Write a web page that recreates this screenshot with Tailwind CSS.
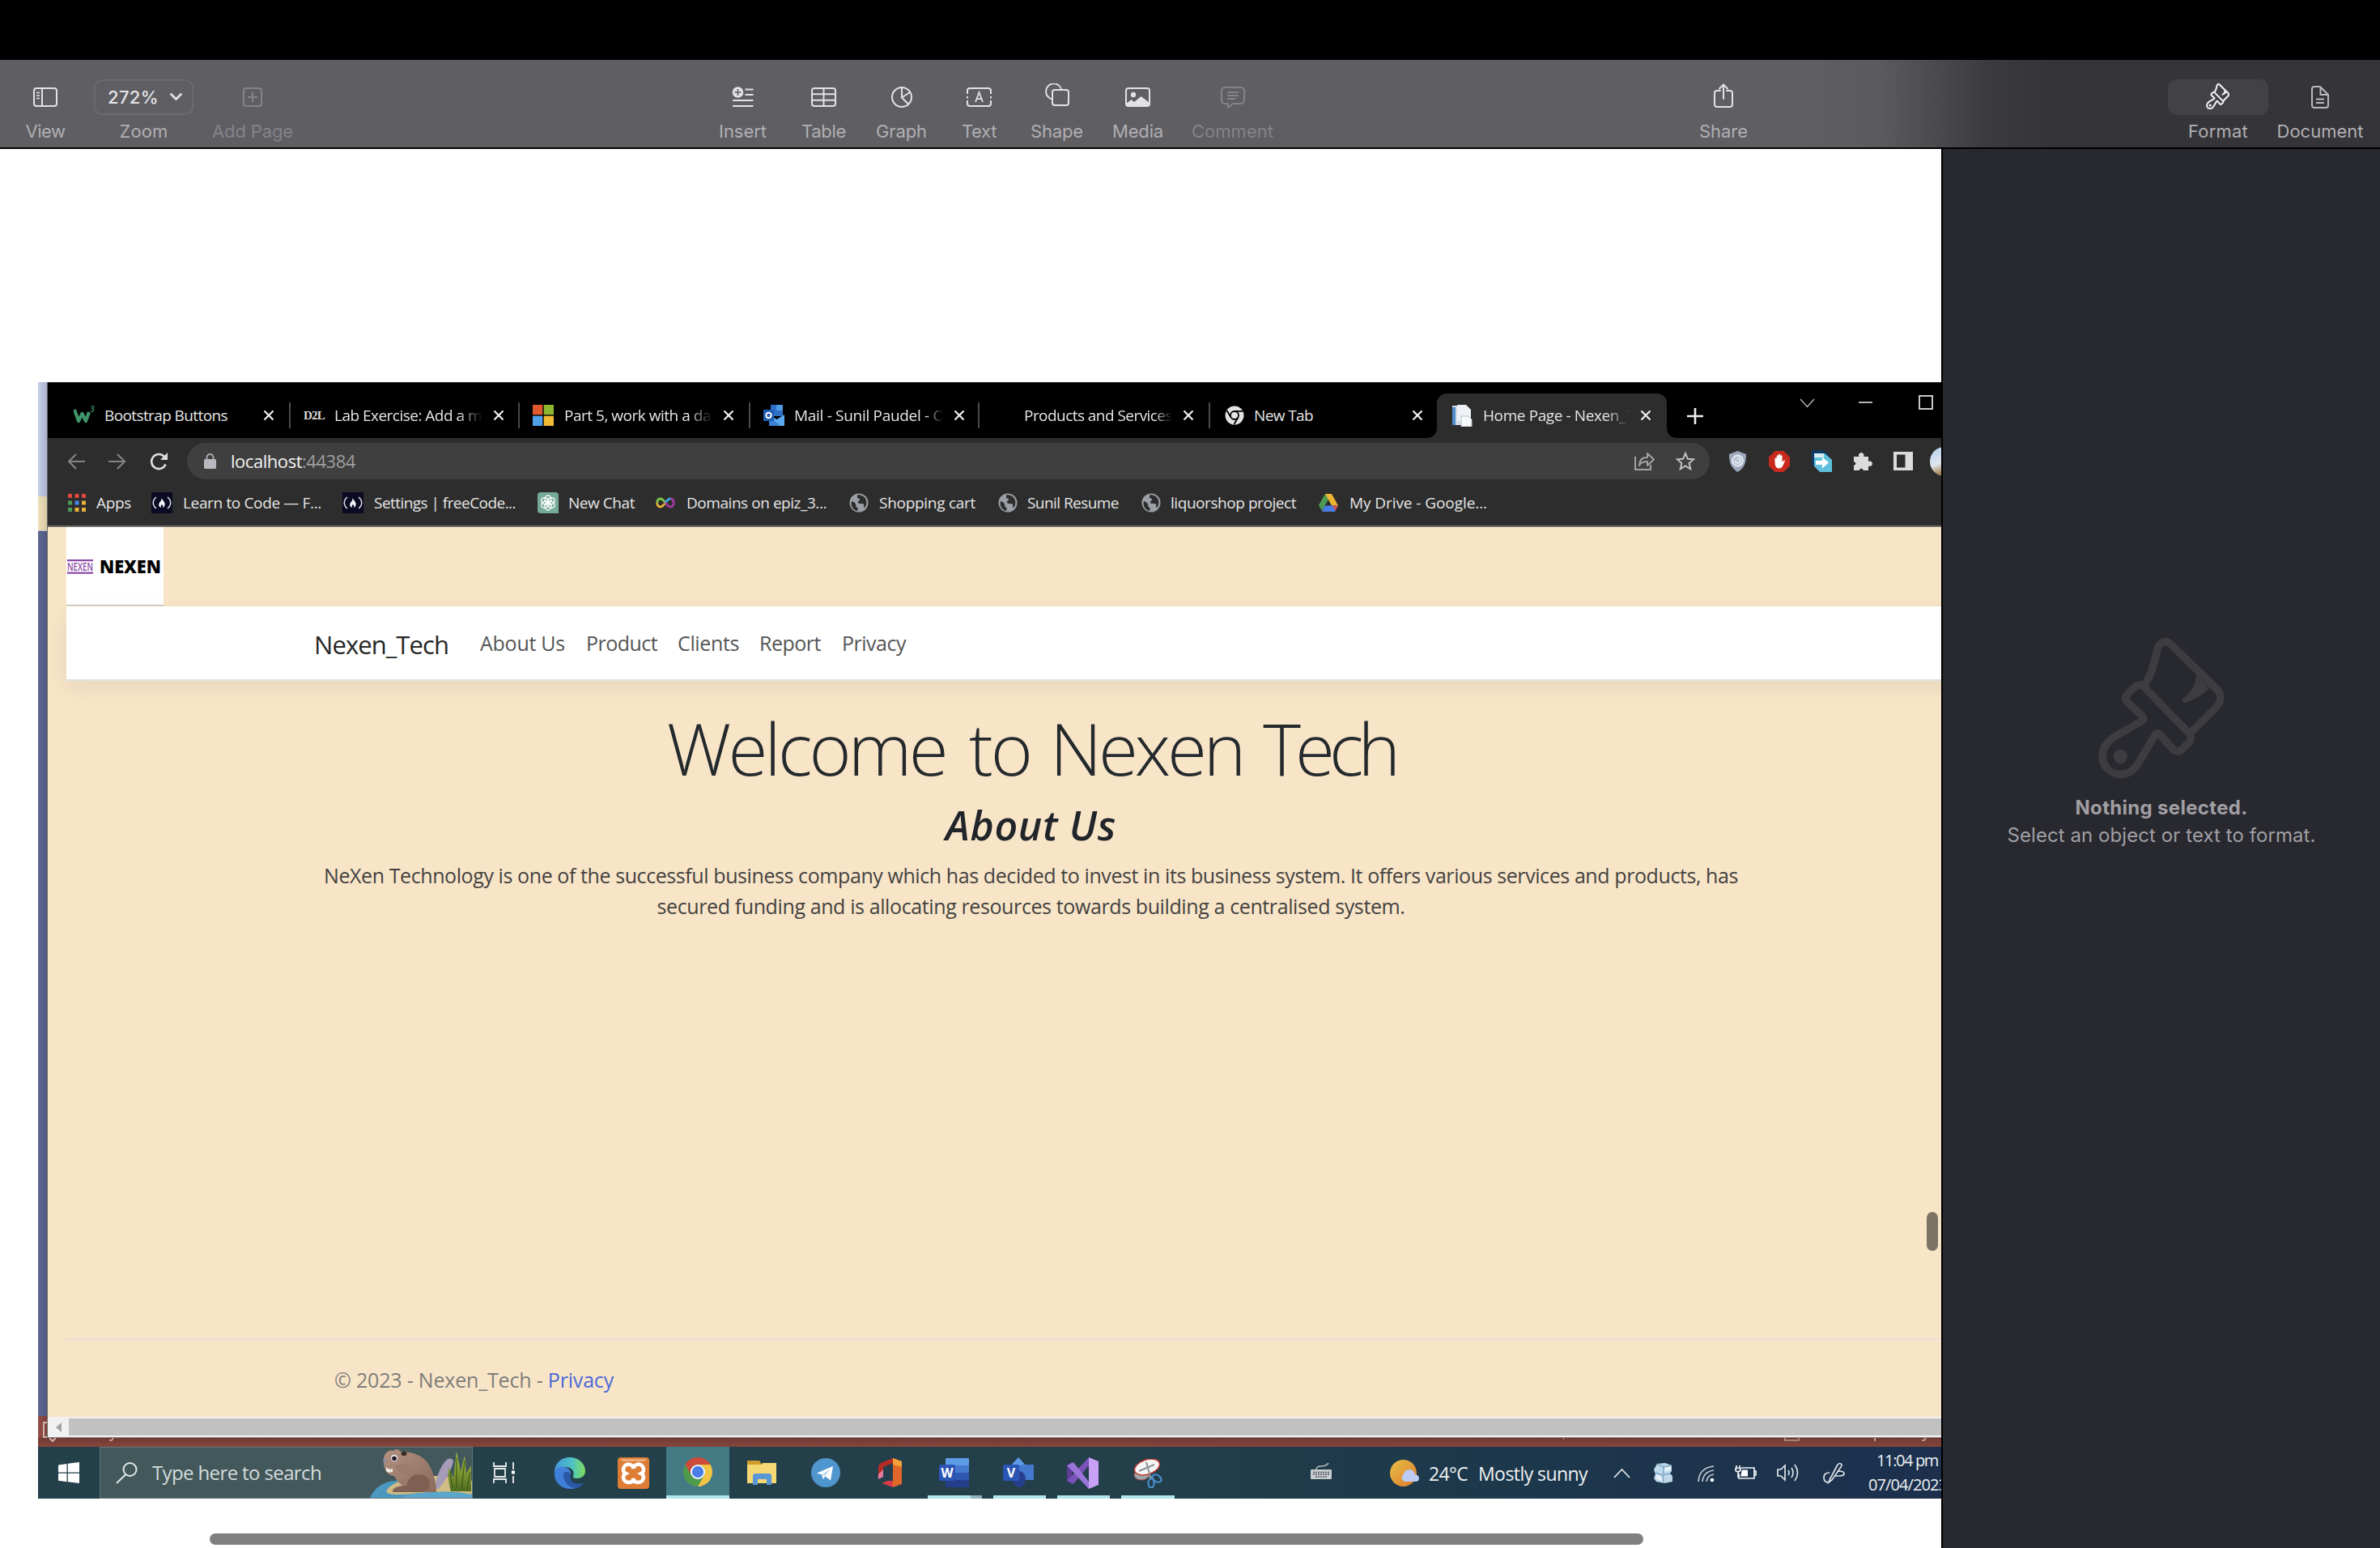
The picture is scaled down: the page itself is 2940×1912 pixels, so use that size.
<!DOCTYPE html>
<html lang="en">
<head>
<meta charset="utf-8">
<title>Pages</title>
<script src="https://cdn.jsdelivr.net/npm/@tailwindcss/browser@4"></script>
</head>
<body class="w-[2940px] h-[1912px] overflow-hidden bg-white flex flex-col font-['Inter',sans-serif]">
<svg width="0" height="0" class="absolute">
  <defs>
    <symbol id="close" viewBox="0 0 14 14"><path d="M1.5 1.5l11 11M12.5 1.5l-11 11" stroke="#f1f1f1" stroke-width="2.200" fill="none"/></symbol>
    <symbol id="globe" viewBox="0 0 24 24"><circle cx="12" cy="12" r="11.500" fill="#9aa0a6"/><path d="M3 10c3 1 4 2 5 3.500s-1 2 1 3.500 2 3 1 5C5 21 1.500 16 3 10zM10 2c1 2-1 3 0 4s3 0 3 2-3 2-2 4 6 0 7 2-1 4 1 4c2-2 3-5 2-9-1-4-5-7-11-7z" fill="#2d2d2d"/></symbol>
    <symbol id="fcc" viewBox="0 0 26 26"><rect width="26" height="26" fill="#0a0a23"/><path d="M6 6c-5 4-5 10 0 14M20 6c5 4 5 10 0 14" stroke="#e8e8ee" stroke-width="1.500" fill="none"/><path d="M12.500 7c1 3 5 5 4 9-.4 1.500-1 2.500-2.500 3 1-2 0-3-1-4-1 1-2 2-1 4-2-.5-3-2-2.800-4 .3-3 3.800-4 3.300-8z" fill="#f3f3f7"/></symbol>
    <symbol id="chrome" viewBox="0 0 24 24"><path d="M22.390 6H12A6 6 0 0 0 6.800 15L1.610 6A12 12 0 0 1 22.390 6Z" fill="#d04a3a"/><path d="M1.610 6L6.800 15A6 6 0 0 0 17.200 15L12 24A12 12 0 0 1 1.610 6Z" fill="#4f9a4b"/><path d="M12 24L17.200 15A6 6 0 0 0 12 6H22.390A12 12 0 0 1 12 24Z" fill="#f0c544"/><circle cx="12" cy="12" r="6" fill="#fff"/><circle cx="12" cy="12" r="4.800" fill="#4a7de8"/></symbol>
    <symbol id="brush" viewBox="0 0 155 173"><g fill="none" stroke="currentColor" stroke-linejoin="round" stroke-linecap="round"><path d="M57 58C66 46 70 28 73 14C74.500 5 84 1.500 90 8L146 63C152.500 69 152.500 78 146 85L115 116"/><path d="M56 60L110 115.500C115 120 116 124 112 129L104 137C100 141 96 141 92 137L76 119C74 117 71.500 117 70 120L51 152C46 161 38 168.500 28 168.500C15 168.500 5 158 5 146C5 136 11 128 20 122L53 103C56 101 56.500 99 54 96L36.500 80C33 76.500 33 73 36.500 69L44 61.500C48 58 52 57 56 60Z"/></g><circle cx="27.300" cy="146.300" r="8.600" fill="currentColor"/><path d="M121 45C121 58 113 69 104.500 75C102 77 104 80.500 107 80C118 77 128 71 137 62Z" fill="currentColor"/></symbol>
  </defs>
</svg>

<!-- menu bar strip -->
<div class="h-[74px] shrink-0 bg-black"></div>

<!-- toolbar -->
<header class="h-[110px] shrink-0 flex pt-6 border-b-2 border-b-black bg-[linear-gradient(to_right,#5f5e63_2230px,#5b5a5f_2320px,#4b4a4f_2390px,#3b3a3f_2455px,#353439_2530px)] text-[22px] text-[#b0afb2] leading-10 whitespace-nowrap">
  <div class="ml-[31px] w-[50px] flex flex-col items-center">
    <div class="h-11 flex items-center"><svg width="30" height="24" viewBox="0 0 30 24" fill="none" stroke="#e2e1e6" stroke-width="2"><rect x="1" y="1" width="28" height="22" rx="3"/><path d="M11 1v22"/><path d="M4 6.500h4M4 10h4M4 13.500h4" stroke-width="1.500"/></svg></div>
    <span data-fit class="w-[49px]">View</span>
  </div>
  <div class="ml-[35px] w-[123px] flex flex-col items-center">
    <div class="h-11 w-full rounded-[10px] border-2 border-[#6b6a6f] flex items-center pl-[15px] text-[#e6e5ea] font-medium"><span data-fit class="w-[63px]">272%</span><svg class="ml-[14px]" width="15" height="10" viewBox="0 0 15 10" fill="none" stroke="#e2e1e6" stroke-width="2.800" stroke-linecap="round" stroke-linejoin="round"><path d="M1.500 1.500l6 6 6-6"/></svg></div>
    <span data-fit class="w-[60px]">Zoom</span>
  </div>
  <div class="ml-[23px] w-[100px] flex flex-col items-center text-[#848388]">
    <div class="h-11 flex items-center"><svg width="24" height="24" viewBox="0 0 24 24" fill="none" stroke="#848388" stroke-width="2"><rect x="1" y="1" width="22" height="22" rx="3"/><path d="M12 6v12M6 12h12"/></svg></div>
    <span data-fit class="w-[100px]">Add Page</span>
  </div>
  <div class="ml-[526px] w-[59px] flex flex-col items-center">
    <div class="h-11 flex items-center"><svg width="28" height="26" viewBox="0 0 28 26" fill="none" stroke="#e2e1e6" stroke-width="2.200"><circle cx="7.500" cy="7" r="6.800" fill="#e2e1e6" stroke="none"/><path d="M7.500 3v8M3.500 7h8" stroke="#5f5e63" stroke-width="1.600"/><path d="M16.500 3.500h10M16.500 10h10M1 17h25.500M1 24h25.500"/></svg></div>
    <span data-fit class="w-[59px]">Insert</span>
  </div>
  <div class="ml-[43px] w-[55px] flex flex-col items-center">
    <div class="h-11 flex items-center"><svg width="31" height="24" viewBox="0 0 31 24" fill="none" stroke="#e2e1e6" stroke-width="2"><rect x="1" y="1" width="29" height="22" rx="3"/><path d="M1 8.300h29M1 15.700h29M15.500 1v22"/></svg></div>
    <span data-fit class="w-[55px]">Table</span>
  </div>
  <div class="ml-[37px] w-[63px] flex flex-col items-center">
    <div class="h-11 flex items-center"><svg width="26" height="26" viewBox="0 0 26 26" fill="none" stroke="#e2e1e6" stroke-width="2"><circle cx="13" cy="13" r="12"/><path d="M13 1v12.500l8 8M13 13.500l10-6.500"/></svg></div>
    <span data-fit class="w-[63px]">Graph</span>
  </div>
  <div class="ml-[43px] w-[43px] flex flex-col items-center">
    <div class="h-11 flex items-center"><svg width="31" height="24" viewBox="0 0 31 24" fill="none" stroke="#e2e1e6" stroke-width="2"><path d="M1 8V4a3 3 0 0 1 3-3h23a3 3 0 0 1 3 3v4M1 16v4a3 3 0 0 0 3 3h23a3 3 0 0 0 3-3v-4M1 11v2.500M30 11v2.500"/><path d="M11 18L15.500 6L20 18M12.500 14.200h6" stroke-width="1.800"/></svg></div>
    <span data-fit class="w-[43px]">Text</span>
  </div>
  <div class="ml-[42px] w-[65px] flex flex-col items-center">
    <div class="h-11 flex items-start"><svg class="mt-[5px]" width="30" height="28" viewBox="0 0 30 28" fill="none" stroke="#e2e1e6" stroke-width="2"><path d="M9 19.500A9.700 9.700 0 1 1 20 7"/><rect x="9" y="8" width="20" height="19" rx="3"/></svg></div>
    <span data-fit class="w-[65px]">Shape</span>
  </div>
  <div class="ml-[36px] w-[63px] flex flex-col items-center">
    <div class="h-11 flex items-center"><svg width="31" height="24" viewBox="0 0 31 24" fill="none" stroke="#e2e1e6" stroke-width="2"><rect x="1" y="1" width="29" height="22" rx="3"/><circle cx="10" cy="9" r="3.200" fill="#e2e1e6" stroke="none"/><path d="M1 20l6.500-5 3.500 3 8.500-7L30 19v2q0 2-3 2H4q-3 0-3-3z" fill="#e2e1e6" stroke="none"/></svg></div>
    <span data-fit class="w-[63px]">Media</span>
  </div>
  <div class="ml-[35px] w-[101px] flex flex-col items-center text-[#848388]">
    <div class="h-11 flex items-center"><svg width="30" height="27" viewBox="0 0 30 27" fill="none" stroke="#848388" stroke-width="2" stroke-linejoin="round"><path d="M5 1h20a4 4 0 0 1 4 4v12a4 4 0 0 1-4 4H15l-6 5v-5H5a4 4 0 0 1-4-4V5a4 4 0 0 1 4-4z"/><path d="M8 7h14M8 11h14M8 15h10" stroke-width="1.800"/></svg></div>
    <span data-fit class="w-[101px]">Comment</span>
  </div>
  <div class="ml-[526px] w-[60px] flex flex-col items-center">
    <div class="h-11 flex items-start"><svg class="mt-[5px]" width="24" height="30" viewBox="0 0 24 30" fill="none" stroke="#e2e1e6" stroke-width="2" stroke-linecap="round" stroke-linejoin="round"><path d="M8 9H4a3 3 0 0 0-3 3v14a3 3 0 0 0 3 3h16a3 3 0 0 0 3-3V12a3 3 0 0 0-3-3h-4M12 19V2M7 6.500L12 1.500l5 5"/></svg></div>
    <span data-fit class="w-[60px]">Share</span>
  </div>
  <div class="ml-[519px] w-[124px] flex flex-col items-center">
    <div class="h-11 w-full rounded-[10px] bg-[#424146] flex items-center justify-center text-[#f2f1f5]"><svg class="mb-[3px] mr-0.5 stroke-[11]" width="29" height="32"><use href="#brush"/></svg></div>
    <span data-fit class="w-[74px]">Format</span>
  </div>
  <div class="ml-[10px] w-[108px] flex flex-col items-center">
    <div class="h-11 flex items-center"><svg width="22" height="28" viewBox="0 0 22 28" fill="none" stroke="#b9b8bd" stroke-width="2" stroke-linejoin="round"><path d="M4 1h7l10 10v13a3 3 0 0 1-3 3H4a3 3 0 0 1-3-3V4a3 3 0 0 1 3-3zM11.500 1v10H21M6 16.500h10M6 21h10"/></svg></div>
    <span data-fit class="w-[107px]">Document</span>
  </div>
</header>

<div class="flex h-[1728px]">
  <!-- document canvas -->
  <main class="relative w-[2398px] h-[1728px] shrink-0 overflow-hidden bg-white pt-[288px] pl-[47px] font-['Open_Sans',sans-serif]">
    <div class="w-[2351px] h-[1379px] overflow-hidden flex flex-col">
      <div class="flex h-[1304px] shrink-0 bg-[#8a463d]">
        <!-- sliver of the window behind -->
        <div class="w-[11px] shrink-0 flex flex-col">
          <div class="h-[141px] bg-linear-to-r from-[#c6cfe9] to-[#aab3cf]"></div>
          <div class="h-[42px] bg-linear-to-r from-[#eee0b8] to-[#d6c9a3]"></div>
          <div class="h-[1094px] border-t border-[#b9bfd6] bg-linear-to-r from-[#5f6892] to-[#505880]"></div>
          <div class="h-[27px] pt-[7px] pl-[6px] bg-linear-to-r from-[#94504a] to-[#7d3f38]"><div class="h-5 w-[5px] border-2 border-r-0 border-[#cfb5b1]"></div></div>
        </div>

        <!-- browser window -->
        <div class="w-[2340px] h-[1304px] flex flex-col bg-[#f8e5c8] border-l border-[#6b6a68]">
          <!-- tab strip -->
          <div class="h-[69px] shrink-0 bg-black border-t border-[#222] flex text-[19px] leading-7 text-[#e6e6e6] whitespace-nowrap [&>*]:shrink-0">
            <div class="mt-[12px] h-14 flex w-[1702px]">
              <div class="w-[298px] flex items-center pl-[32px]">
                <svg width="26" height="26" viewBox="0 0 26 26"><path d="M1 6l5 14 4.500-9 4.500 9L19 9" fill="none" stroke="#3f9468" stroke-width="4.200" stroke-linejoin="round"/><path d="M21 2h4l-2 3c3 0 2 4-2 3" fill="none" stroke="#3f9468" stroke-width="1.200"/></svg>
                <span data-fit class="ml-[12px] w-[152px]">Bootstrap Buttons</span>
                <svg class="ml-[44px]" width="14" height="14"><use href="#close"/></svg>
              </div>
              <div class="w-[283px] flex items-center"><i class="w-0.5 h-8 bg-[#4a4a4a]"></i>
                <span data-fit class="ml-[16px] w-[26px] text-[15px] font-['Liberation_Serif',serif] font-bold text-[#dcdcdc]">D2L</span>
                <div class="ml-[12px] w-[183px] overflow-hidden [mask-image:linear-gradient(to_right,black_84%,transparent)]"><span data-fit class="block w-[182px]">Lab Exercise: Add a m</span></div>
                <svg class="ml-[13px]" width="14" height="14"><use href="#close"/></svg>
              </div>
              <div class="w-[285px] flex items-center"><i class="w-0.5 h-8 bg-[#4a4a4a]"></i>
                <svg class="ml-[16px]" width="26" height="26" viewBox="0 0 26 26"><path d="M0 0h12.300v12.300H0z" fill="#e2582e"/><path d="M13.700 0H26v12.300H13.700z" fill="#8db82f"/><path d="M0 13.700h12.300V26H0z" fill="#4fa0e8"/><path d="M13.700 13.700H26V26H13.700z" fill="#f2bb35"/></svg>
                <div class="ml-[13px] w-[183px] overflow-hidden [mask-image:linear-gradient(to_right,black_84%,transparent)]"><span data-fit class="block w-[181px]">Part 5, work with a da</span></div>
                <svg class="ml-[13px]" width="14" height="14"><use href="#close"/></svg>
              </div>
              <div class="w-[283px] flex items-center"><i class="w-0.5 h-8 bg-[#4a4a4a]"></i>
                <svg class="ml-[16px]" width="26" height="26" viewBox="0 0 26 26"><path d="M9 0h15v14H9z" fill="#2f6fc4"/><path d="M16 0h8v7h-8z" fill="#4d9be8"/><path d="M7 12l9.500 6L26 12v14H7z" fill="#5aaaf0"/><path d="M7 14l14 12H7z" fill="#3b82d4"/><rect y="6" width="13" height="14" fill="#1f5cb4"/><circle cx="6.500" cy="13" r="3.200" fill="none" stroke="#fff" stroke-width="2"/></svg>
                <div class="ml-[12px] w-[184px] overflow-hidden [mask-image:linear-gradient(to_right,black_88%,transparent)]"><span data-fit class="block w-[186px]">Mail - Sunil Paudel - O</span></div>
                <svg class="ml-[13px]" width="14" height="14"><use href="#close"/></svg>
              </div>
              <div class="w-[285px] flex items-center"><i class="w-0.5 h-8 bg-[#4a4a4a]"></i>
                <div class="ml-[55px] w-[183px] overflow-hidden [mask-image:linear-gradient(to_right,black_88%,transparent)]"><span data-fit class="block w-[183px]">Products and Services</span></div>
                <svg class="ml-[13px]" width="14" height="14"><use href="#close"/></svg>
              </div>
              <div class="w-[268px] flex items-center"><i class="w-0.5 h-8 bg-[#4a4a4a]"></i>
                <svg class="ml-[18px]" width="24" height="24" viewBox="0 0 24 24"><circle cx="12" cy="12" r="11.500" fill="#e4e4e4"/><circle cx="12" cy="12" r="5" fill="#e4e4e4" stroke="#000" stroke-width="1.800"/><path d="M12 6.800h10M7.500 14.500L2.500 6M16.500 14.500L11.500 23" stroke="#000" stroke-width="1.800"/></svg>
                <span data-fit class="ml-[12px] w-[73px]">New Tab</span>
                <svg class="ml-[122px]" width="14" height="14"><use href="#close"/></svg>
              </div>
            </div>
            <!-- active tab -->
            <svg class="mt-[44px] ml-[2px]" width="12" height="24" viewBox="0 0 12 24"><path d="M12 10v14H0q12-1 12-14z" fill="#2d2d2d"/></svg>
            <div class="mt-[13px] w-[284px] h-[56px] rounded-t-xl bg-[#2d2d2d] flex items-center pl-[18px] pb-[2px]">
              <svg width="26" height="27" viewBox="0 0 26 27"><path d="M1 1h13l8 6v18H1z" fill="#d5dde8"/><path d="M1 3h4v22H1z" fill="#4f8fd0"/><path d="M7 0h11l6 6v14H7z" fill="#eef1f6"/><path d="M12 14h9l4 4v9H12z" fill="#f8fafc" stroke="#b8c0cc"/></svg>
              <div class="ml-[13px] w-[181px] overflow-hidden [mask-image:linear-gradient(to_right,black_84%,transparent)]"><span data-fit class="block w-[186px]">Home Page - Nexen_T</span></div>
              <svg class="ml-[13px]" width="14" height="14"><use href="#close"/></svg>
            </div>
            <svg class="mt-[44px]" width="12" height="24" viewBox="0 0 12 24"><path d="M0 10v14h12Q0 23 0 10z" fill="#2d2d2d"/></svg>
            <svg class="ml-[13px] mt-[31px]" width="20" height="20" viewBox="0 0 20 20"><path d="M10 0v20M0 10h20" stroke="#f1f1f1" stroke-width="2.600"/></svg>
            <svg class="ml-[119px] mt-[19px]" width="19" height="12" viewBox="0 0 19 12"><path d="M1 1l8.500 9.500L18 1" stroke="#b0b0b0" stroke-width="1.500" fill="none"/></svg>
            <i class="ml-[54px] mt-[23px] w-[17px] h-0.5 bg-[#b5b5b5]"></i>
            <i class="ml-[57px] mt-[15px] w-[18px] h-[18px] border-2 border-[#c9c9c9]"></i>
          </div>

          <!-- address row -->
          <div class="h-[57px] shrink-0 bg-[#2d2d2d] flex items-center overflow-hidden [&>*]:shrink-0">
            <svg class="ml-[24px]" width="22" height="20" viewBox="0 0 22 20" fill="none" stroke="#858585" stroke-width="2"><path d="M22 10H2M11 1l-9 9 9 9"/></svg>
            <svg class="ml-[29px]" width="22" height="20" viewBox="0 0 22 20" fill="none" stroke="#858585" stroke-width="2"><path d="M0 10h20M11 1l9 9-9 9"/></svg>
            <svg class="ml-[29px]" width="23" height="22" viewBox="0 0 23 22" fill="none" stroke="#dedede" stroke-width="2.600"><path d="M19.500 14.500A9 9 0 1 1 18 5.200"/><path d="M22 0v9h-9z" fill="#dedede" stroke="none"/></svg>
            <div class="ml-[23px] w-[1881px] h-[45px] rounded-full bg-[#3f3f3f] flex items-center">
              <svg class="ml-[21px]" width="15" height="19" viewBox="0 0 15 19"><rect y="7" width="15" height="12" rx="1.500" fill="#b8b9bf"/><path d="M3.500 8V5a4 4 0 0 1 8 0v3" fill="none" stroke="#a9aaaf" stroke-width="2"/></svg>
              <div data-fit class="ml-[18px] mb-[2px] w-[154px] text-[22px] leading-8 text-[#f2f2f2] whitespace-nowrap">localhost<span class="text-[#9d9d9d]">:44384</span></div>
              <svg class="ml-[1580px]" width="25" height="23" viewBox="0 0 25 23" fill="none" stroke="#a2a2a2" stroke-width="2"><path d="M1 6v16h19v-6"/><path d="M6 17c0-7 4-10 10-10V2l8 7.500-8 7.500v-5c-5 0-8 1-10 5z" stroke-linejoin="round"/></svg>
              <svg class="ml-[26px]" width="24" height="23" viewBox="0 0 24 23" fill="none" stroke="#c2c2c2" stroke-width="2"><path d="M12 2l2.900 6.800 7.100.6-5.400 4.700 1.700 7.200L12 17.400l-6.300 3.900 1.700-7.200L2 9.400l7.100-.6z"/></svg>
            </div>
            <svg class="ml-[24px]" width="21" height="26" viewBox="0 0 21 26"><path d="M10.500 0L21 4c0 10-2 17-10.500 22C2 21 0 14 0 4z" fill="#9ea8bd"/><circle cx="10.500" cy="12" r="6.500" fill="#b9c2d3" stroke="#e9edf4" stroke-width="1.800"/><path d="M7.500 12a3 3 0 1 0 3-3" fill="none" stroke="#e9edf4" stroke-width="1.500"/></svg>
            <svg class="ml-[28px]" width="26" height="26" viewBox="0 0 26 26"><path d="M7.600 0h10.800L26 7.600v10.800L18.400 26H7.600L0 18.400V7.600z" fill="#c92a1e"/><path d="M7.500 14V9q1.500-1.200 2.200 0V6q1.200-1.500 2.300 0V4.500q1.200-1.500 2.300 0V6q1.200-1.500 2.300 0v8l2-2.500q2-.5 1 1.500L17 19q-1.500 2.500-4.500 2.500-5 0-5-7.500z" fill="#fff"/></svg>
            <svg class="ml-[27px]" width="25" height="27" viewBox="0 0 25 27"><path d="M0 0h14l7 6v13H0z" fill="#0e3b66"/><path d="M3 4h13l9 8v15H10l-7-7z" fill="#5fc0dc"/><path d="M3 4h12v5H3z" fill="#d9eef5"/><path d="M5 13h8V8.500l8 7-8 7V18H5z" fill="#fff"/></svg>
            <svg class="ml-[26px]" width="24" height="24" viewBox="0 0 24 24" fill="#dcdcdc"><path d="M1 6h6.500a3.200 3.200 0 1 1 5.500 0h6v6a3.200 3.200 0 1 1 0 5.500V23h-6q-2.800-5-5.500 0H1v-6q5-2.500 0-5z"/></svg>
            <svg class="ml-[26px]" width="24" height="23" viewBox="0 0 24 23"><path fill="#dcdcdc" fill-rule="evenodd" d="M0 0h24v23H0zM4 3.500v16h10.500v-16z"/></svg>
            <div class="ml-[21px] w-9 h-9 rounded-full bg-[linear-gradient(160deg,#c4d8f0_20%,#dfe6ee_50%,#a98d5e_75%,#5f4d33)]"></div>
          </div>

          <!-- bookmarks -->
          <div class="h-[53px] shrink-0 bg-[#2d2d2d] border-b-2 border-[#6e6c69] pb-[5px] flex items-center text-[19px] leading-7 text-[#e6e6e6] whitespace-nowrap [&>*]:shrink-0">
            <svg class="ml-[25px]" width="22" height="22" viewBox="0 0 22 22"><path d="M0 0h5v5H0zM8.500 0h5v5h-5zM17 0h5v5h-5z" fill="#e0493c"/><path d="M0 8.500h5v5H0z" fill="#4d9b55"/><path d="M8.500 8.500h5v5h-5z" fill="#4a86e8"/><path d="M17 8.500h5v5h-5zM8.500 17h5v5h-5zM17 17h5v5h-5z" fill="#eab03c"/><path d="M0 17h5v5H0z" fill="#4d9b55"/></svg>
            <span data-fit class="ml-[13px] w-[43px]">Apps</span>
            <svg class="ml-[25px]" width="26" height="26"><use href="#fcc"/></svg>
            <span data-fit class="ml-[13px] w-[171px]">Learn to Code — F...</span>
            <svg class="ml-[26px]" width="26" height="26"><use href="#fcc"/></svg>
            <span data-fit class="ml-[13px] w-[175px]">Settings | freeCode...</span>
            <svg class="ml-[27px]" width="26" height="26" viewBox="0 0 26 26"><path d="M4 0h18q4 0 4 4v22H4q-4 0-4-4V4q0-4 4-4z" fill="#75a99a"/><g fill="none" stroke="#fff" stroke-width="1.400"><ellipse cx="13" cy="9" rx="4" ry="5"/><ellipse cx="13" cy="9" rx="4" ry="5" transform="rotate(60 13 13)"/><ellipse cx="13" cy="9" rx="4" ry="5" transform="rotate(120 13 13)"/><ellipse cx="13" cy="9" rx="4" ry="5" transform="rotate(180 13 13)"/><ellipse cx="13" cy="9" rx="4" ry="5" transform="rotate(240 13 13)"/><ellipse cx="13" cy="9" rx="4" ry="5" transform="rotate(300 13 13)"/></g></svg>
            <span data-fit class="ml-[12px] w-[82px]">New Chat</span>
            <svg class="ml-[26px]" width="24" height="14" viewBox="0 0 24 14" fill="none" stroke-width="2.800"><path d="M12 7C9 2.500 7.500 2 5.500 2a4.500 5 0 0 0-3.800 5" stroke="#7cc04a"/><path d="M1.700 7a4.500 5 0 0 0 3.800 5C8 12 9 11 12 7" stroke="#e8b13a"/><path d="M12 7c3-4.500 4.500-5 6.500-5" stroke="#3fa3e8"/><path d="M18.500 2c5 0 5 10 0 10-2 0-3.500-.5-6.500-5" stroke="#a23aa0"/></svg>
            <span data-fit class="ml-[14px] w-[173px]">Domains on epiz_3...</span>
            <svg class="ml-[28px]" width="24" height="24"><use href="#globe"/></svg>
            <span data-fit class="ml-[13px] w-[119px]">Shopping cart</span>
            <svg class="ml-[28px]" width="24" height="24"><use href="#globe"/></svg>
            <span data-fit class="ml-[12px] w-[113px]">Sunil Resume</span>
            <svg class="ml-[28px]" width="24" height="24"><use href="#globe"/></svg>
            <span data-fit class="ml-[12px] w-[155px]">liquorshop project</span>
            <svg class="ml-[28px]" width="24" height="22" viewBox="0 0 24 22"><path d="M8 0h8l-8.500 14.500L4 21 0 14z" fill="#4e9a53"/><path d="M8 0h8l8 14.500h-8z" fill="#edb532"/><path d="M7.500 14.500H24L20 22H4z" fill="#4a7ee6"/><path d="M17 14.500h7l-3.500 6z" fill="#d9493c"/></svg>
            <span data-fit class="ml-[14px] w-[170px]">My Drive - Google...</span>
          </div>

          <!-- web page -->
          <div class="h-[1099px] shrink-0 pl-[23px] overflow-hidden text-[#212529] whitespace-nowrap">
            <div class="h-[97px] w-[120px] bg-white border-b border-[#b5b5b5] flex items-center">
              <svg width="120" height="18" viewBox="0 0 120 18" class="mt-[2px]"><g fill="#8a4aa8"><path d="M1 0h32v2.200H1zM1 15.500h32v2.200H1z"/><text x="1" y="13.800" font-size="13.500" textLength="32" lengthAdjust="spacingAndGlyphs" font-family="Open Sans" font-weight="600">NEXEN</text></g><text x="41" y="16.500" font-size="22" textLength="76" lengthAdjust="spacingAndGlyphs" font-family="Open Sans" font-weight="800" fill="#000">NEXEN</text></svg>
            </div>
            <div class="mt-px h-[92px] w-[2380px] bg-white border-b-2 border-[#dee2e6] shadow-[0_8px_24px_rgba(0,0,0,0.07)] flex items-center text-[25px] leading-[38px] text-[#555]">
              <span data-fit class="ml-[306px] w-[166px] text-[31px] leading-[46px] mt-[3px] text-[#262626]">Nexen_Tech</span>
              <span data-fit class="ml-[39px] w-[105px]">About Us</span>
              <span data-fit class="ml-[26px] w-[88px]">Product</span>
              <span data-fit class="ml-[25px] w-[76px]">Clients</span>
              <span data-fit class="ml-[25px] w-[76px]">Report</span>
              <span data-fit class="ml-[26px] w-[79px]">Privacy</span>
            </div>
            <div class="w-[2383px] flex flex-col items-center">
              <h1 class="mt-[29px] flex text-[89px] leading-[107px] font-light text-[#24292c]"><span data-fit class="w-[344px]">Welcome</span>&nbsp;<span data-fit class="ml-[6px] w-[76px]">to</span>&nbsp;<span data-fit class="ml-[1px] w-[238px]">Nexen</span>&nbsp;<span data-fit class="ml-[2px] w-[163px]">Tech</span></h1>
              <h2 data-fit class="mt-[13px] w-[211px] text-[50px] leading-[59px] font-semibold italic">About Us</h2>
              <p data-fit class="mt-[13px] w-[1747px] text-[25px] leading-[38px] text-[#444240]">NeXen Technology is one of the successful business company which has decided to invest in its business system. It offers various services and products, has</p>
              <p data-fit class="w-[924px] text-[25px] leading-[39px] text-[#444240]">secured funding and is allocating resources towards building a centralised system.</p>
            </div>
            <div class="mt-[514px] w-[2380px] border-t-2 border-[#e9dfd6] pt-[30px] pl-[331px] text-[25px] leading-[38px] text-[#7d7d7a]">
              <div data-fit class="w-[345px]">© 2023 - Nexen_Tech - <span class="text-[#4a69d6]">Privacy</span></div>
            </div>
          </div>

          <!-- page scrollbar -->
          <div class="h-[26px] shrink-0 flex bg-[#f1f1f1] border-b border-[#8c8a88]">
            <div class="w-[26px] flex items-center justify-center"><svg width="7" height="12" viewBox="0 0 7 12"><path d="M7 0v12L0 6z" fill="#a3a3a3"/></svg></div>
            <div class="grow mt-[2px] mb-[2px] bg-[#c1c1c1]"></div>
          </div>
        </div>
      </div>

      <div class="h-[11px] shrink-0 bg-linear-to-b from-[#703a33] to-[#85463d] flex items-start">
        <svg class="ml-[14px]" width="8" height="5" viewBox="0 0 8 5"><path d="M0 0l4 4 4-4" fill="none" stroke="#cfb5b1" stroke-width="2"/></svg>
        <svg class="ml-[66px]" width="6" height="4" viewBox="0 0 6 4"><path d="M5 0L3 3H0" fill="none" stroke="#cfb5b1" stroke-width="1.500"/></svg>
        <i class="ml-[1790px] w-px h-[2px] bg-[#b89a95]"></i>
        <i class="ml-[272px] w-[19px] h-[4px] border-2 border-t-0 border-[#a9827c]"></i>
        <i class="ml-[92px] w-[2px] h-[4px] bg-[#c0a39e]"></i>
        <svg class="ml-[57px]" width="6" height="4" viewBox="0 0 6 4"><path d="M5 0L3 3H0" fill="none" stroke="#cfb5b1" stroke-width="1.500"/></svg>
      </div>

      <!-- taskbar -->
      <div class="h-16 shrink-0 flex items-center bg-[linear-gradient(to_right,#24404b,#23404a_55%,#1d384b_75%,#1c304e)] text-[#eef2f3] whitespace-nowrap overflow-hidden">
        <svg class="ml-[25px] shrink-0" width="26" height="26" viewBox="0 0 26 26" fill="#fff"><path d="M0 3.500L10.500 2v10.500H0zM11.800 1.800L26 0v12.500H11.800zM0 13.800h10.500v10.500L0 22.800zM11.800 13.800H26V26l-14.200-1.700z"/></svg>
        <div class="ml-[25px] w-[461px] h-16 shrink-0 border border-[#62767a] bg-[#42585b] flex items-center">
          <svg class="ml-[19px]" width="27" height="27" viewBox="0 0 27 27" fill="none" stroke="#e3e8e8" stroke-width="2"><circle cx="17.500" cy="9" r="8"/><path d="M12 15.500L1 26"/></svg>
          <span data-fit class="ml-[18px] w-[209px] text-[24px] leading-9 text-[#d5dcdc]">Type here to search</span>
          <svg class="ml-[60px]" width="126" height="62" viewBox="0 0 126 62">
            <defs><linearGradient id="fur" x1="0" y1="0" x2="1" y2="1"><stop offset="0" stop-color="#b2917f"/><stop offset="1" stop-color="#8a6b5c"/></linearGradient><linearGradient id="grass" x1="0" y1="0" x2="0" y2="1"><stop offset="0" stop-color="#b4c94a"/><stop offset="1" stop-color="#4d6b1e"/></linearGradient></defs>
            <path d="M0 62c6-14 18-20 30-21 30-3 60 2 96 14v7z" fill="#4a97bf"/>
            <path d="M20 54C26 42 50 36 80 35c20 0 34 2 46 6v17C90 50 60 58 32 58q-10 0-12-4z" fill="#d0bd85"/>
            <path d="M38 61c26-8 60-7 88-3v4H38z" fill="#5aa7cc"/>
            <path d="M80 50c2-14 8-30 16-36q6-2 7 3c-2 10-10 24-18 34z" fill="#a69cb8"/>
            <path d="M17 18C16 8 22 2 29 4c3-4 8-1 9 1 14 0 28 4 36 18 6 12 8 22 8 32H28c-2-5 6-8 12-8-4-3-8-8-10-12-6 0-13-5-13-17z" fill="url(#fur)"/>
            <path d="M28 55c2-6 10-7 18-8 0-8 6-14 14-14 10 0 15 6 14 14-1 6-6 8-14 8z" fill="#7d6052"/>
            <ellipse cx="43" cy="27" rx="11" ry="6" fill="#9b7b6b" transform="rotate(18 43 27)"/>
            <circle cx="30" cy="13" r="4.200" fill="#e8e4ee"/><circle cx="30" cy="13.500" r="2.800" fill="#1f1a26"/><ellipse cx="42" cy="7.500" rx="3.500" ry="2.800" fill="#3d2c25"/>
            <circle cx="18" cy="16" r="2" fill="#8a8fb5"/><path d="M20 24q3 4 8 2v4q-5 2-8-1z" fill="#f0ebe6"/>
            <path d="M100 54c-3-12-4-20-3-30l6 14 4-33 5 25 5-20 2 22 6-10v32z" fill="url(#grass)"/>
            <path d="M107 50V12M113 52l4-36M102 50l-3-20M120 52l4-22" stroke="#3f5a18" stroke-width="1.200" fill="none"/>
          </svg>
        </div>
        <svg class="ml-[25px] shrink-0" width="27" height="26" viewBox="0 0 27 26" fill="none" stroke="#e8eced" stroke-width="1.800"><path d="M1 0v5h15V0M1 26v-5h15v5M2 8h13v10H2zM25 0v9M25 17v9"/><path d="M23 10.500h4v4h-4z" fill="#fff" stroke="none"/></svg>
        <svg class="ml-[48px] shrink-0" width="40" height="39" viewBox="0 0 40 39"><defs><linearGradient id="ed" x1="0" y1="0" x2="1" y2="0"><stop offset="0" stop-color="#4597d8"/><stop offset=".55" stop-color="#4dc0c8"/><stop offset="1" stop-color="#7de05a"/></linearGradient></defs><path d="M20 0c11 0 19 8 19 17 0 6-5 9-10 9-4 0-6-1-5-3 2-5-1-10-8-11C8 11 1 16 1 21 0 9 8 0 20 0z" fill="url(#ed)"/><path d="M1 21c0-8 7-11 13-9 4 1 7 4 7 8-4 5-2 12 6 14 4 1 7 0 9-2-3 5-9 7-15 7C9 39 1 31 1 21z" fill="#3f80d8"/><path d="M12 22c0 8 6 16 16 16 4-1 7-3 9-7-4 2-9 2-13 0-4-3-4-7-3-11-4-3-9-3-9 2z" fill="#2b58a6"/></svg>
        <svg class="ml-[39px] shrink-0" width="39" height="39" viewBox="0 0 39 39"><rect width="39" height="39" rx="4" fill="#dd7d35"/><path d="M3 2h33l-3 3H6z" fill="#f0ac78"/><path d="M12 8.500q7 0 7.500 5.500 .5-5.500 7.500-5.500 5 2 5 7 0 3-3 4.500 3 1.500 3 5-1 6-7 6-5 0-5.500-5-.5 5-5.500 5-6 0-7-6 0-3.500 3-5-3-1.500-3-4.500 0-5 5-7z" fill="none" stroke="#fff" stroke-width="4.500"/></svg>
        <div class="ml-[21px] w-[78px] h-16 shrink-0 bg-[#437a83] border-b-4 border-[#b2e6ea] flex items-center justify-center pt-0.5"><svg width="36" height="36"><use href="#chrome"/></svg></div>
        <svg class="ml-[22px] shrink-0" width="36" height="30" viewBox="0 0 36 30"><path d="M0 0h15l2 3v6H0z" fill="#d09c2c"/><path d="M0 5h17l2-2h17v25H0z" fill="#f4d873"/><path d="M7 30V19q0-3 3-3h17q3 0 3 3v11h-6v-7H13v7z" fill="#5a97d6"/></svg>
        <svg class="ml-[43px] shrink-0" width="36" height="36" viewBox="0 0 36 36"><circle cx="18" cy="18" r="18" fill="#4f96cf"/><path d="M7 18.500L27 10l-3 17.500-6.500-5-3 3.500-1-5.500z" fill="#fff"/><path d="M13.500 20L24 13l-7 9z" fill="#b9d6ea"/></svg>
        <svg class="ml-[47px] shrink-0" width="29" height="36" viewBox="0 0 29 36"><path d="M18 0L3 6Q0 8 0 12v14l6-3V11l12-5z" fill="#b52b22"/><path d="M0 20v6l6-3V14z" fill="#e87ba0"/><path d="M18 0l11 4v28l-11 4z" fill="#e0662a"/><path d="M18 0l11 4v7l-11-3z" fill="#f2a13a"/><path d="M4 31l7-3h7v8z" fill="#d93a4a"/></svg>
        <div class="ml-[32px] w-[67px] h-16 shrink-0 flex flex-col items-center">
          <svg class="mt-[14px] mr-[2px]" width="38" height="36" viewBox="0 0 38 36"><rect x="8" width="29" height="9" rx="1" fill="#5f9ce8"/><rect x="8" y="9" width="29" height="9" fill="#4479cf"/><rect x="8" y="18" width="29" height="9" fill="#2f58b0"/><rect x="8" y="27" width="29" height="9" rx="1" fill="#263f8c"/><rect y="8" width="20" height="20" rx="1.500" fill="#2b55b4"/><text x="10" y="24" text-anchor="middle" font-size="16" font-weight="700" font-family="Open Sans" fill="#fff" textLength="15" lengthAdjust="spacingAndGlyphs">W</text></svg>
          <div class="mt-auto h-1 w-full bg-linear-to-r from-[#b2e6ea] from-79% to-[#8fb5bb] to-79%"></div>
        </div>
        <div class="ml-[14px] w-[65px] h-16 shrink-0 flex flex-col items-center">
          <svg class="mt-[13px] mr-[3px]" width="38" height="37" viewBox="0 0 38 37"><path d="M19 0l10 11-10 11L9 11z" fill="#5f9ce8"/><path d="M19 11q6-3 9-2h10v19H22z" fill="#4479cf"/><ellipse cx="20" cy="27" rx="8" ry="10" fill="#263f8c"/><rect y="9" width="20" height="20" rx="1.500" fill="#2b55b4"/><text x="10" y="25" text-anchor="middle" font-size="16" font-weight="700" font-family="Open Sans" fill="#fff">V</text></svg>
          <div class="mt-auto h-1 w-full bg-[#b2e6ea]"></div>
        </div>
        <div class="ml-[14px] w-[65px] h-16 shrink-0 flex flex-col items-center">
          <svg class="mt-[13px] mr-[2px]" width="39" height="39" viewBox="0 0 39 39"><path d="M0 10l6-4v27l-6-4z" fill="#5f3c96"/><path d="M8 33l-8-4 27-29v10z" fill="#7a52b8"/><path d="M0 10l8-4 19 24v9z" fill="#9a74d8"/><path d="M27 0l12 5v29l-12 5z" fill="#c8a0f6"/></svg>
          <div class="mt-auto h-1 w-full bg-[#b2e6ea]"></div>
        </div>
        <div class="ml-[14px] w-[66px] h-16 shrink-0 flex flex-col items-center">
          <svg class="mt-[15px]" width="36" height="36" viewBox="0 0 36 36"><ellipse cx="10" cy="20" rx="9" ry="6" fill="#9aa5aa" stroke="#b5504a"/><ellipse cx="17" cy="10" rx="16" ry="9" transform="rotate(-18 17 10)" fill="#f6f6f6" stroke="#cc3b33" stroke-width="1.500"/><path d="M16 4l5 18M7 15L26 7" stroke="#8b9298" stroke-width="2"/><path d="M19 21l4 3" stroke="#8b9298" stroke-width="3"/><g fill="none" stroke="#4a8fd0" stroke-width="2.200"><ellipse cx="29" cy="24" rx="6" ry="4" transform="rotate(35 29 24)"/><ellipse cx="22" cy="30" rx="3.500" ry="5.500"/></g></svg>
          <div class="mt-auto h-1 w-full bg-[#b2e6ea]"></div>
        </div>
        <svg class="ml-[168px] shrink-0 mb-[5px]" width="26" height="20" viewBox="0 0 26 20"><path d="M7 8Q7 4 13 4t9-4" fill="none" stroke="#b5bcc0" stroke-width="1.500"/><rect y="8" width="26" height="12" rx="1" fill="#c9cdd0"/><path d="M3 11.500h20M3 14h20M6 17h14" stroke="#4f5960" stroke-width="1.300" stroke-dasharray="2 1"/></svg>
        <svg class="ml-[72px] shrink-0" width="36" height="33" viewBox="0 0 36 33"><defs><linearGradient id="sun" x1="0" y1="0" x2="1" y2="1"><stop offset="0" stop-color="#e8bf45"/><stop offset="1" stop-color="#dd7a2e"/></linearGradient></defs><circle cx="16.500" cy="16.500" r="16.500" fill="url(#sun)"/><path d="M18 27a5 5 0 0 1-1-9q1-6 7-6 6 0 7 6 5 1 5 5 0 4-5 4z" fill="#bcccf5"/></svg>
        <span data-fit class="ml-[12px] shrink-0 w-[48px] text-[23px] leading-9 mt-[2px]">24°C</span>
        <span data-fit class="ml-[13px] shrink-0 w-[135px] text-[23px] leading-9 mt-[2px]">Mostly sunny</span>
        <svg class="ml-[32px] shrink-0" width="21" height="13" viewBox="0 0 21 13"><path d="M1 12l9.500-10L20 12" fill="none" stroke="#dfe4e8" stroke-width="1.800"/></svg>
        <svg class="ml-[29px] shrink-0" width="24" height="25" viewBox="0 0 24 25"><path d="M4 1l10-1 8 3v7l-2 3 3 3v7l-10 2-10-2-3-4 2-5-2-6z" fill="#bfd9ea"/><path d="M4 1l8 4 10-2M2 12l9 3 9-2M12 5v10M11 15l1 10" stroke="#7ea9c6" stroke-width="1.500" fill="none"/><path d="M13 6l8-2v5l-8 2zM2 14l8 3v5l-7-2z" fill="#e6f2f8"/></svg>
        <svg class="ml-[30px] shrink-0 mt-[2px]" width="21" height="21" viewBox="0 0 21 21" fill="none" stroke="#c2cbd4" stroke-width="1.700"><path d="M1 20Q2 3 20 1M6 20Q7 8 20 6M11 20q1-8 9-9"/><circle cx="18" cy="18" r="2.300" fill="#fff" stroke="none"/></svg>
        <svg class="ml-[25px] shrink-0" width="27" height="18" viewBox="0 0 27 18" fill="none" stroke="#f0f3f5" stroke-width="1.700"><path d="M8 3h16v13H5v-6M24.500 7h1.500v5h-1.500M2 0v3M6 0v3M1 3.500h6v3Q4 9 1 6.500zM4 8v7"/><path d="M9 5.500h7v8H7z" fill="#fff" stroke="none"/></svg>
        <svg class="ml-[25px] shrink-0" width="27" height="24" viewBox="0 0 27 24" fill="none" stroke="#dde3e8" stroke-width="1.700"><path d="M1 8h4l5-5v18l-5-5H1z"/><path d="M14 9q2 3 0 6M18 6q4 6 0 12M22 2q7 10 0 20"/></svg>
        <svg class="ml-[30px] shrink-0" width="27" height="27" viewBox="0 0 27 27" fill="none" stroke="#dde3e8" stroke-width="1.700"><path d="M8 22l10-19q3-3 5 0 0 2-1 3L11 22l-4 3zM8 13q-7 0-7 6 0 6 6 6M19 11q7 0 7 3 0 3-6 3h-5"/></svg>
        <div class="ml-[29px] w-[100px] shrink-0 text-[20px] leading-[30px] pb-[1px]">
          <div data-fit class="ml-[10px] w-[76px]">11:04 pm</div>
          <div data-fit class="w-[97px]">07/04/2023</div>
        </div>
      </div>
    </div>
    <!-- overlay scrollbars -->
    <div class="absolute left-[259px] top-[1710px] w-[1771px] h-[14px] rounded-full bg-[#808080]"></div>
    <div class="absolute left-[2380px] top-[1313px] w-[14px] h-[48px] rounded-full bg-[#7c7364]"></div>
  </main>

  <!-- format inspector -->
  <aside class="w-[542px] shrink-0 border-l-2 border-black bg-[#28282f] flex flex-col items-center text-[#a09fa3] text-[24px] leading-[34px] whitespace-nowrap">
    <svg class="mt-[604px] mr-[1px] text-[#3d3c41] stroke-[9.500]" width="155" height="173"><use href="#brush"/></svg>
    <div data-fit class="mt-[20px] w-[213px] font-bold">Nothing selected.</div>
    <div data-fit class="w-[381px]">Select an object or text to format.</div>
  </aside>
</div>

<script>
  // Spread each label's letters evenly so that it fills its column,
  // again whenever the column's width changes.
  function fit(el) {
    el.style.letterSpacing = '0px';
    const range = document.createRange();
    range.selectNodeContents(el);
    const gap = el.clientWidth - range.getBoundingClientRect().width;
    if (el.clientWidth > 0 && Math.abs(gap) < el.clientWidth * 0.3) {
      el.style.letterSpacing = (gap / el.textContent.length) + 'px';
    }
  }
  const observer = new ResizeObserver(entries => entries.forEach(e => fit(e.target)));
  document.querySelectorAll('[data-fit]').forEach(el => observer.observe(el));
</script>
</body>
</html>
